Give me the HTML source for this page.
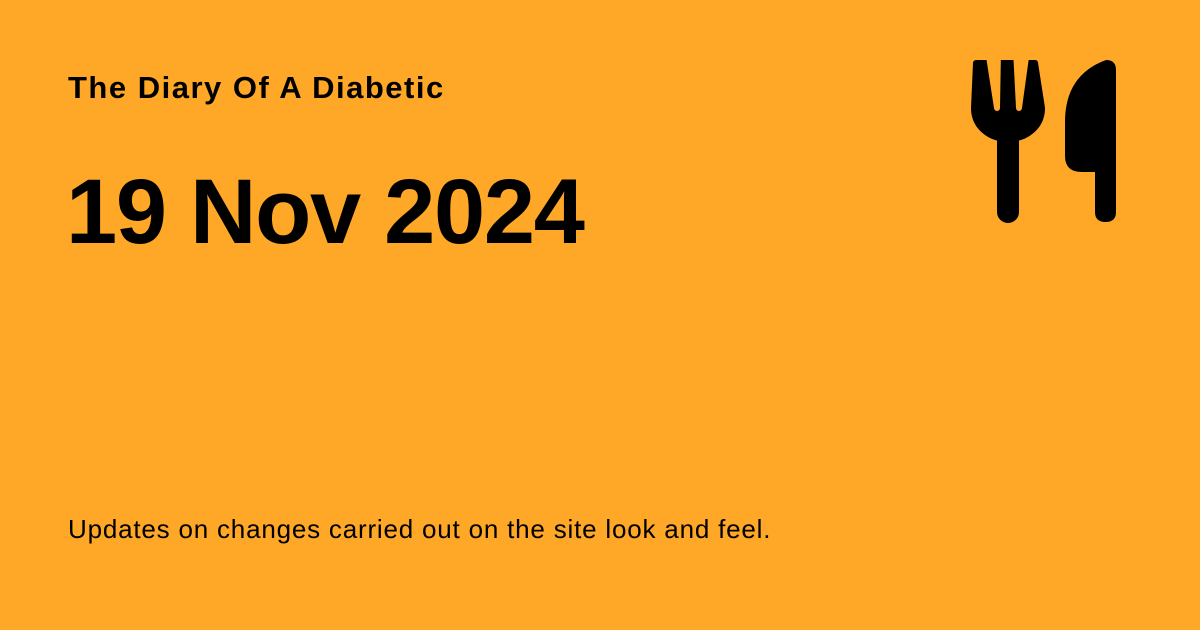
<!DOCTYPE html>
<html><head><style>
html,body{margin:0;padding:0}
body{width:1200px;height:630px;background:#ffa726;position:relative;overflow:hidden;font-family:"Liberation Sans",Arial,sans-serif;color:#000}
.t{position:absolute;left:68px;top:70px;font-size:31px;font-weight:bold;letter-spacing:1.5px}
.d{position:absolute;left:66px;top:160px;font-size:92px;font-weight:bold;letter-spacing:-1.3px}
.s{position:absolute;left:68px;top:514px;font-size:26px;letter-spacing:0.8px}
svg{position:absolute;left:0;top:0}
</style></head><body>
<div class="t">The Diary Of A Diabetic</div>
<div class="d">19 Nov 2024</div>
<div class="s">Updates on changes carried out on the site look and feel.</div>
<svg width="1200" height="630">
<g fill="#000" stroke="#000" stroke-linecap="round">
<path d="M976,63 L1035,63 L1042,108 C1042,127 1026,139 1008,139 C990,139 974,127 974,108 Z" stroke-width="6" stroke-linejoin="round"/>
<line x1="1008" y1="135" x2="1008" y2="212" stroke-width="22"/>
<path d="M1116,70 Q1116,60 1106,60 Q1065,75 1065,122 L1065,156 Q1065,172 1082,172 L1095,172 L1095,212 Q1095,222 1105.5,222 Q1116,222 1116,212 Z" stroke="none"/>
</g>
<g fill="#ffa726">
<polygon points="985,50 1001,50 1000,108 994,108"/>
<circle cx="997" cy="108" r="3"/>
<polygon points="1013,50 1030,50 1022,108 1016,108"/>
<circle cx="1019" cy="108" r="3"/>
</g>
</svg>
</body></html>
